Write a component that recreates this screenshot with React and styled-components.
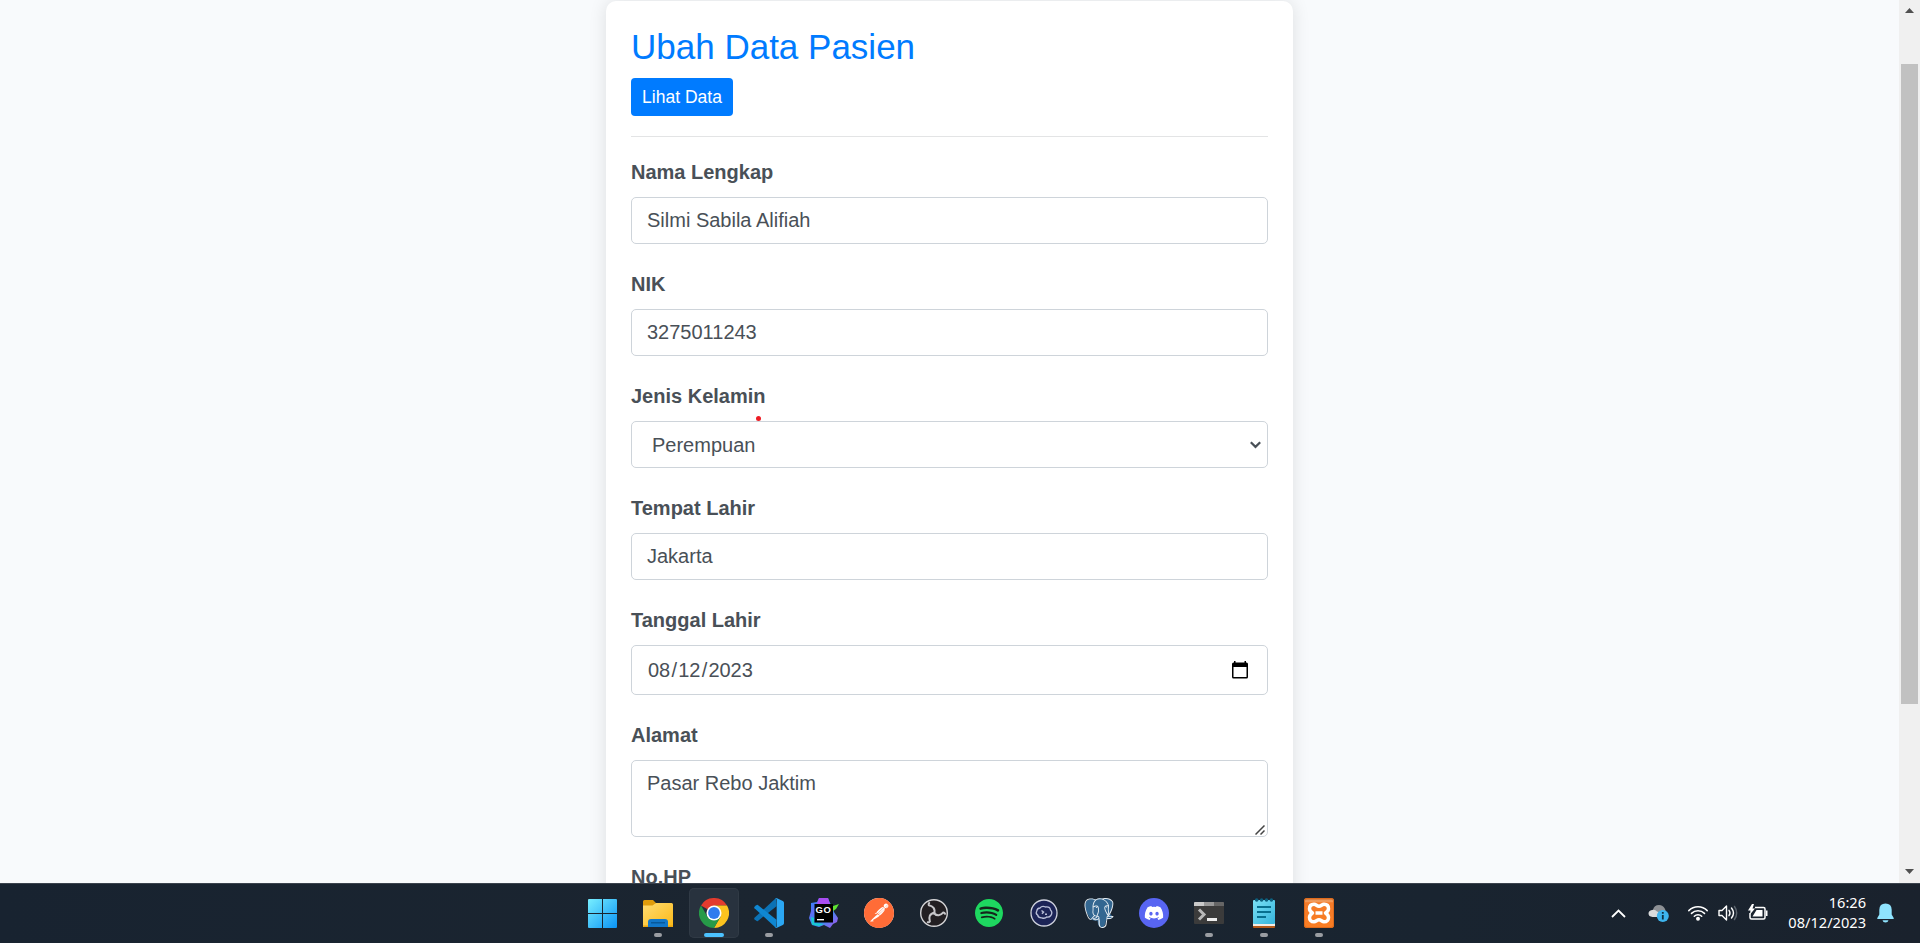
import React from 'react';
import styled, { createGlobalStyle, css } from 'styled-components';
import { SiPostman, SiSpotify, SiPostgresql } from 'react-icons/si';
import { FaDiscord } from 'react-icons/fa';

const GlobalStyle = createGlobalStyle`
  *, *::before, *::after { box-sizing: border-box; }
  html, body { margin: 0; padding: 0; overflow: hidden; }
  body { font-family: "Liberation Sans", Arial, sans-serif; color: #495057; }
  svg { display: block; flex: none; }
`;

const Screen = styled.div`
  display: flex;
  flex-direction: column;
  width: 1920px;
  height: 943px;
  overflow: hidden;
`;

const Viewport = styled.div`
  display: flex;
  height: 883px;
  overflow: hidden;
  background: #f8fafc;
`;

const Page = styled.main`
  flex: 1;
  display: flex;
  justify-content: center;
  align-items: flex-start;
  padding-top: 1px;
`;

const Card = styled.section`
  width: 687px;
  height: 1020px;
  padding: 25px;
  border-radius: 10px;
  background: #fff;
  box-shadow: 0 0 18px rgba(0, 0, 0, 0.11);
`;

const Title = styled.h2`
  margin: 0 0 10px;
  font-size: 35px;
  line-height: 42px;
  font-weight: 400;
  color: #007bff;
`;

const Button = styled.button`
  display: flex;
  align-items: center;
  justify-content: center;
  width: 102px;
  height: 38px;
  padding: 0 0 1px;
  border: 0;
  border-radius: 4px;
  background: #007bff;
  color: #fff;
  font: 400 17.5px/26px "Liberation Sans", Arial, sans-serif;
  white-space: nowrap;
`;

const Divider = styled.hr`
  height: 1px;
  margin: 20px 0 20px;
  border: 0;
  background: #e3e4e5;
`;

const Field = styled.div`
  margin-bottom: 25px;
`;

const Label = styled.div`
  margin-bottom: 10px;
  font-size: 20px;
  line-height: 30px;
  font-weight: 700;
`;

const Control = styled.div`
  position: relative;
  display: flex;
  justify-content: space-between;
  align-items: ${(p) => (p.$kind === 'area' ? 'flex-start' : 'center')};
  height: ${(p) => ({ date: 50, area: 77 }[p.$kind] || 47)}px;
  padding: ${(p) =>
    ({ select: '0 6px 0 20px', date: '0 19px 0 16px', area: '7px 0 0 15px' }[p.$kind] || '0 15px 2px')};
  border: 1px solid #ced4da;
  border-radius: 5px;
  background: #fff;
  font-size: 20px;
  line-height: 30px;
`;

const DateSlash = styled.span`
  padding: 0 1.2px;
`;

const ResizeGrip = styled.svg`
  position: absolute;
  right: 2px;
  bottom: 1px;
`;

const Pointer = styled.span`
  position: absolute;
  left: 124px;
  top: -6px;
  width: 5px;
  height: 5px;
  border-radius: 50%;
  background: #ed1c24;
`;

const ScrollTrack = styled.div`
  display: flex;
  flex-direction: column;
  align-items: center;
  justify-content: space-between;
  width: 21px;
  padding: 8px 0 9px;
  background: #f0f0f0;
`;

const ScrollThumb = styled.div`
  width: 17px;
  height: 640px;
  margin: 51px 0 auto;
  background: #c1c1c1;
`;

const Taskbar = styled.footer`
  display: flex;
  align-items: flex-start;
  height: 60px;
  padding: 4px 0 0 577px;
  border-top: 1px solid #3b434d;
  background: linear-gradient(90deg, #182330, #1b2530 40%, #192430 75%, #1a222d);
`;

const Apps = styled.nav`
  display: flex;
  gap: 5px;
`;

const AppSlot = styled.div`
  display: flex;
  flex-direction: column;
  align-items: center;
  width: 50px;
  height: 50px;
  padding-top: 10px;
  border-radius: 5px;
  &:nth-child(-n + 2) { margin-right: 1px; }
  ${(p) => p.$active && css`
    background: #28323e;
    box-shadow: inset 0 0 0 1px #303a45;
  `}
`;

const Running = styled.span`
  width: ${(p) => (p.$active ? 20 : 8)}px;
  height: 4px;
  margin-top: 5px;
  border-radius: 2px;
  background: ${(p) => (p.$active ? '#4cc2ff' : '#9a9da2')};
`;

const Tray = styled.div`
  display: flex;
  align-items: center;
  height: 50px;
  margin-left: auto;
  padding-right: 26px;
`;

const TrayIcon = styled.span`
  margin-right: ${(p) => p.$gap}px;
`;

const Clock = styled.div`
  width: 82px;
  margin: -3px 11px 0 0;
  color: #fff;
  font: 400 14.6px/20px "Noto Sans", "Open Sans", sans-serif;
  text-align: right;
  white-space: nowrap;
`;

const Disc = styled.span`
  display: flex;
  align-items: center;
  justify-content: center;
  width: ${(p) => p.$size || 30}px;
  height: ${(p) => p.$size || 30}px;
  margin: ${(p) => (30 - (p.$size || 30)) / 2}px;
  border-radius: 50%;
  background: ${(p) => p.$bg};
  color: ${(p) => p.$fg};
`;

const Icon30 = ({ children }) => (
  <svg width="30" height="30" viewBox="0 0 30 30">{children}</svg>
);

const Windows = () => (
  <Icon30>
    <defs>
      <linearGradient id="win" x1="0" y1="0" x2="30" y2="30" gradientUnits="userSpaceOnUse">
        <stop offset="0" stopColor="#7cf2ff" />
        <stop offset="1" stopColor="#0a93f5" />
      </linearGradient>
    </defs>
    <path fill="url(#win)" d="M2 1h13v14H1V2a1 1 0 0 1 1-1zM16 1h13a1 1 0 0 1 1 1v13H16zM1 16h14v14H2a1 1 0 0 1-1-1zM16 16h14v13a1 1 0 0 1-1 1H16z" />
  </Icon30>
);

const Explorer = () => (
  <Icon30>
    <defs>
      <linearGradient id="fold" x1="0" y1="0" x2="1" y2="1">
        <stop offset="0" stopColor="#ffdc72" />
        <stop offset="1" stopColor="#fbb917" />
      </linearGradient>
    </defs>
    <path fill="#e09c0b" d="M0 3.500A1.500 1.500 0 0 1 1.500 2H10l3 3-1 5H0z" />
    <path fill="url(#fold)" d="M0 7.500h9.500L13 5h15.500A1.500 1.500 0 0 1 30 6.500V29H0z" />
    <path fill="#eaa50f" d="M0 27.500h30V28a1 1 0 0 1-1 1H1a1 1 0 0 1-1-1z" />
    <path fill="#1277c9" d="M5 29v-5a3 3 0 0 1 3-3h14a3 3 0 0 1 3 3v5z" />
    <path stroke="#07518f" strokeWidth="1.200" d="M8 24.800h14" />
  </Icon30>
);

const Chrome = () => (
  <Icon30>
    <path fill="#e33b2e" d="M15 15 2 7.500A15 15 0 0 1 28 7.500H15z" />
    <path fill="#fcc31e" d="M28 7.500A15 15 0 0 1 15 30l6.500-11.250L15 7.500z" />
    <path fill="#269a48" d="M2 7.500A15 15 0 0 0 15 30l6.500-11.250L15 22.500 8.500 18.750z" />
    <circle cx="15" cy="15" r="7.500" fill="#fff" />
    <circle cx="15" cy="15" r="5.900" fill="#2f7bee" />
  </Icon30>
);

const VSCode = () => (
  <Icon30>
    <path fill="#0b72b5" d="M22 0 .5 19.800q-.6.700 0 1.400l1.800 1.600q.8.600 1.600.1L22.500 8.300z" />
    <path fill="#0f87d2" d="M.5 8.800q-.6.700 0 1.400L22 30l.5-8.300L3.900 7.100q-.8-.5-1.600.1z" />
    <path fill="#2ba7f3" d="M22.500.1l6.300 2.900q1.200.6 1.200 1.800v20.400q0 1.200-1.200 1.800l-6.300 2.900q-.8.300-1.400-.4 1.600.5 1.600-1.200V1.700q0-1.700-1.600-1.200.6-.7 1.400-.4z" />
  </Icon30>
);

const GoText = styled.text`
  font: 700 9.5px "Liberation Sans", Arial, sans-serif;
  fill: #fff;
`;

const GoLand = () => (
  <Icon30>
    <defs>
      <linearGradient id="gol" x1="0" y1="0" x2="1" y2="1">
        <stop offset="0" stopColor="#1d8df2" />
        <stop offset=".3" stopColor="#5f6cf5" />
        <stop offset=".55" stopColor="#2596ed" />
        <stop offset="1" stopColor="#b44df0" />
      </linearGradient>
    </defs>
    <path fill="url(#gol)" d="m2 5 6-1 2-4h9l2 5 3 4 1 5 4 6-1 4-4 2-3 4-6-3-5 2-7-2-3-7 2-7z" />
    <path fill="#a94df2" d="m10 0h9l2 6H8z" />
    <path fill="#18cbd0" d="m2 19 3 1v5l10 1-5 2-7-1.500z" />
    <path fill="#5ee432" d="m24 8 6-2-3 5-3 2z" />
    <rect x="5.500" y="6" width="18.500" height="18.500" fill="#000" />
    <GoText x="6.500" y="14.800" textLength="15.500">GO</GoText>
    <path fill="#fff" d="M8 21h7v1.400H8z" />
  </Icon30>
);

const Obs = () => (
  <Icon30>
    <circle cx="15" cy="15" r="13.300" fill="#221f22" stroke="#d4d4d6" strokeWidth="1.400" />
    <g fill="none" stroke="#c6c6c9" strokeWidth="2" strokeLinecap="round">
      <path id="obs-arm" d="M15 15.500C16.800 10.800 13.800 8 9.800 7.200 9.300 6.300 9.700 5.600 10.200 5" />
      <path d="M15 15.500C16.800 10.800 13.800 8 9.800 7.200 9.300 6.300 9.700 5.600 10.200 5" transform="rotate(120 15 15)" />
      <path d="M15 15.500C16.800 10.800 13.800 8 9.800 7.200 9.300 6.300 9.700 5.600 10.200 5" transform="rotate(240 15 15)" />
    </g>
  </Icon30>
);

const Termius = () => (
  <Icon30>
    <circle cx="15" cy="15" r="13" fill="#1c2456" stroke="#cfd2dd" strokeWidth="1.300" />
    <path fill="none" stroke="#b9bfd8" strokeWidth="1.300" d="M11 10q2-2.500 5.500-1 4.500-.8 5 3 2.500 2.500.3 5.500-1.500 2-4 1.500-2 2-5 .8-3.500.2-4.200-2.800-2.300-1.500-.8-4 .2-2.700 3.200-3z" />
    <path stroke="#b9bfd8" strokeWidth="1.500" d="m12.500 12.500 2 1.500-1.500 1.700M16 16.300h2" fill="none" />
  </Icon30>
);

const PgWrap = styled.span`
  display: grid;
  place-items: center;
  width: 30px;
  height: 30px;
  color: #e6edf2;
  > * { grid-area: 1 / 1; }
`;

const Postgres = () => (
  <PgWrap>
    <Icon30>
      <path fill="#336791" d="M3 2.500Q7-.5 12 1.500 16-.5 20 1q6-1.500 8.500 2.500Q30 8 26 15.500l3 3.500q-3 3-7 2.500-.5 7-4 8-4 .5-4.500-7Q9 23 7 21.500 0 12 1 6q.5-2 2-3.500z" />
    </Icon30>
    <SiPostgresql size={30} />
  </PgWrap>
);

const Terminal = () => (
  <Icon30>
    <path fill="#3b3b3b" d="M0 5a1 1 0 0 1 1-1h28a1 1 0 0 1 1 1v20a1 1 0 0 1-1 1H1a1 1 0 0 1-1-1z" />
    <path fill="#c9c9c9" d="M0 8V5a1 1 0 0 1 1-1h9v4z" />
    <path fill="#989898" d="M10 4h10v4H10z" />
    <path fill="#666" d="M20 4h9a1 1 0 0 1 1 1v3H20z" />
    <path fill="none" stroke="#b8b8b8" strokeWidth="3" d="m5 11.500 5 5-5 5" />
    <path fill="#eee" d="M13 20h10v3H13z" />
  </Icon30>
);

const Notepad = () => (
  <Icon30>
    <defs>
      <linearGradient id="note" x1="0" y1="0" x2="1" y2="1">
        <stop offset="0" stopColor="#7be1f5" />
        <stop offset="1" stopColor="#35b4dc" />
      </linearGradient>
    </defs>
    <rect x="4" y="24" width="22" height="6" rx="1" fill="#b55a1a" />
    <rect x="4" y="24" width="22" height="4" fill="#f4ece4" />
    <rect x="4" y="2" width="22" height="24" rx="1" fill="url(#note)" />
    <g fill="#0c5f7d">
      <circle cx="7.700" cy="2" r="1.800" /><circle cx="12.600" cy="2" r="1.800" />
      <circle cx="17.500" cy="2" r="1.800" /><circle cx="22.400" cy="2" r="1.800" />
    </g>
    <path stroke="#08708f" strokeWidth="2" d="M8 9h14M8 14h14M8 19h9" />
  </Icon30>
);

const XamppTile = styled.span`
  display: flex;
  align-items: center;
  justify-content: center;
  width: 30px;
  height: 30px;
  border-radius: 3px;
  background: linear-gradient(#c7601c, #f4a468 10%, #f47b2a 16%, #fa7d22);
  box-shadow: inset 0 0 0 1px #dd6a1c;
`;

const Xampp = () => (
  <XamppTile>
    <svg width="24" height="22" viewBox="0 0 24 22" fill="none" stroke="#fff" strokeWidth="3.500" strokeLinejoin="round">
      <path d="M7 2.200c2 0 3 2 5 2s3-2 5-2c3 0 4.500 2 4.500 4.500S20 10 18.500 11c1.500 1 3 2 3 4.400S20 19.800 17 19.800c-2 0-3-2-5-2s-3 2-5 2c-3 0-4.500-2-4.500-4.400S4 12 5.500 11C4 10 2.500 9.200 2.500 6.700S4 2.200 7 2.200z" />
      <path d="M8.500 11h7" strokeWidth="3.500" />
    </svg>
  </XamppTile>
);

const apps = [
  { id: 'start', icon: <Windows /> },
  { id: 'explorer', icon: <Explorer />, running: true },
  { id: 'chrome', icon: <Chrome />, running: true, active: true },
  { id: 'vscode', icon: <VSCode />, running: true },
  { id: 'goland', icon: <GoLand /> },
  { id: 'postman', icon: <Disc $bg="#fff" $fg="#ff6c37"><SiPostman size={30} /></Disc> },
  { id: 'obs', icon: <Obs /> },
  { id: 'spotify', icon: <Disc $size={28} $bg="#15251c" $fg="#1ed760"><SiSpotify size={28} /></Disc> },
  { id: 'termius', icon: <Termius /> },
  { id: 'postgres', icon: <Postgres /> },
  { id: 'discord', icon: <Disc $bg="#5865f2" $fg="#fff"><FaDiscord size={20} /></Disc> },
  { id: 'terminal', icon: <Terminal />, running: true },
  { id: 'notepad', icon: <Notepad />, running: true },
  { id: 'xampp', icon: <Xampp />, running: true },
];

const fields = [
  { label: 'Nama Lengkap', value: 'Silmi Sabila Alifiah' },
  { label: 'NIK', value: '3275011243' },
  { label: 'Jenis Kelamin', value: 'Perempuan', kind: 'select' },
  { label: 'Tempat Lahir', value: 'Jakarta' },
  {
    label: 'Tanggal Lahir',
    value: <>08<DateSlash>/</DateSlash>12<DateSlash>/</DateSlash>2023</>,
    kind: 'date',
  },
  { label: 'Alamat', value: 'Pasar Rebo Jaktim', kind: 'area' },
  { label: 'No.HP', value: '' },
];

const adornments = {
  select: (
    <>
      <Pointer />
      <svg width="11" height="8" viewBox="0 0 11 8" fill="none" stroke="#495057" strokeWidth="2.200">
        <path d="m.8 1.200 4.700 4.700 4.700-4.700" />
      </svg>
    </>
  ),
  date: (
    <svg width="16" height="18" viewBox="0 0 16 18">
      <path fill="#000" fillRule="evenodd" d="M2 0h1.500v1.500h9V0H14v1.500h.5A1.500 1.500 0 0 1 16 3v13a1.500 1.500 0 0 1-1.500 1.500h-13A1.500 1.500 0 0 1 0 16V3a1.500 1.500 0 0 1 1.500-1.500H2zM1.500 6v10h13V6z" />
    </svg>
  ),
  area: (
    <ResizeGrip width="10" height="10" viewBox="0 0 10 10" stroke="#444" strokeWidth="1.500">
      <path d="M.5 9.500l9-9M5.500 9.500l4-4" />
    </ResizeGrip>
  ),
};

export default function App() {
  return (
    <Screen>
      <GlobalStyle />
      <Viewport>
        <Page>
          <Card>
            <Title>Ubah Data Pasien</Title>
            <Button>Lihat Data</Button>
            <Divider />
            {fields.map((f) => (
              <Field key={f.label}>
                <Label>{f.label}</Label>
                <Control $kind={f.kind}>
                  <span>{f.value}</span>
                  {adornments[f.kind]}
                </Control>
              </Field>
            ))}
          </Card>
        </Page>
        <ScrollTrack>
          <svg width="9" height="5" viewBox="0 0 9 5"><path fill="#505050" d="M0 5 4.500 0 9 5z" /></svg>
          <ScrollThumb />
          <svg width="9" height="5" viewBox="0 0 9 5"><path fill="#505050" d="M0 0h9L4.500 5z" /></svg>
        </ScrollTrack>
      </Viewport>
      <Taskbar>
        <Apps>
          {apps.map((a) => (
            <AppSlot key={a.id} $active={a.active}>
              {a.icon}
              {a.running && <Running $active={a.active} />}
            </AppSlot>
          ))}
        </Apps>
        <Tray>
          <TrayIcon $gap={22}>
            <svg width="15" height="9" viewBox="0 0 15 9" fill="none" stroke="#fff" strokeWidth="1.800"><path d="m1 8 6.500-6.500L14 8" /></svg>
          </TrayIcon>
          <TrayIcon $gap={19}>
            <svg width="21" height="18" viewBox="0 0 21 18">
              <path fill="#8d9094" d="M5 6q1-5 6-5 4 0 6 4l1 3-9 3z" />
              <path fill="#d9dadb" d="M4.500 13Q.5 12.500.5 9.500T4 6q3-1 5 1.500L17 11v2z" />
              <circle cx="14.800" cy="12" r="6" fill="#3db4ee" />
              <path stroke="#0c3044" strokeWidth="1.800" d="M14.800 11v4.500M14.800 8v1.800" />
            </svg>
          </TrayIcon>
          <TrayIcon $gap={10}>
            <svg width="20" height="16" viewBox="0 0 20 16" fill="none" stroke="#fff" strokeWidth="1.500" strokeLinecap="round">
              <path d="M.8 5.600a13 13 0 0 1 18.400 0M3.500 8.400a9.200 9.200 0 0 1 13 0M6.300 11.200a5.300 5.300 0 0 1 7.400 0" />
              <circle cx="10" cy="13.800" r="1.200" fill="#fff" />
            </svg>
          </TrayIcon>
          <TrayIcon $gap={10}>
            <svg width="20" height="18" viewBox="0 0 20 18" fill="none" stroke="#fff" strokeWidth="1.400" strokeLinejoin="round">
              <path d="M1 6.500h3L8.500 2v14L4 11.500H1z" />
              <path d="M11 6.300q2 2.700 0 5.400M13.500 4q4 5 0 10" strokeLinecap="round" />
              <path d="M16.200 2q5 7 0 14" stroke="#5c646d" />
            </svg>
          </TrayIcon>
          <TrayIcon $gap={16}>
            <svg width="20" height="18" viewBox="0 0 20 18">
              <path fill="none" stroke="#fff" strokeWidth="1.500" d="M7 3.500h8.500A1.500 1.500 0 0 1 17 5v8.500a1.500 1.500 0 0 1-1.500 1.500h-12A1.500 1.500 0 0 1 2 13.500V9" />
              <path fill="#fff" d="M18 6.500h1.500V12H18zM8.500 6h6v6.500h-10z" />
              <path fill="#fff" d="M4 0 0 6.500h2.500L2 10.500l5-6H4.500L6 0z" />
            </svg>
          </TrayIcon>
          <Clock>
            <div>16:26</div>
            <div>08/12/2023</div>
          </Clock>
          <svg width="17" height="20" viewBox="0 0 17 20" fill="#8fe3fd">
            <path d="M8.500.5q6 0 6.200 6.200v4.800l2 3.500v1H.3v-1l2-3.500V6.700Q2.500.5 8.500.5zM5.500 17.200h6q-.5 2.300-3 2.300t-3-2.300z" />
          </svg>
        </Tray>
      </Taskbar>
    </Screen>
  );
}
